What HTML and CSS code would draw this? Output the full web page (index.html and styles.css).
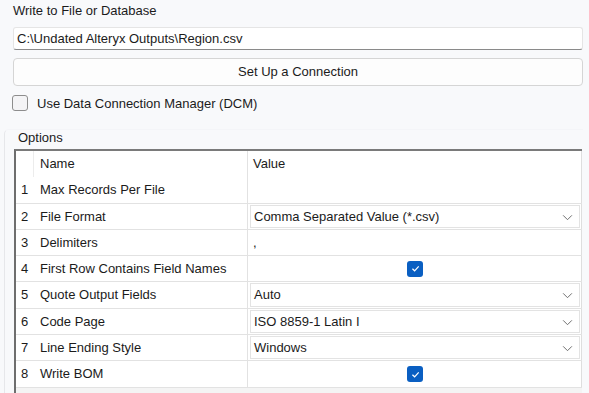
FILE: index.html
```html
<!DOCTYPE html>
<html>
  <head>
    <title>Write to File or Database</title>
    <meta charset="UTF-8" />
    <link rel="stylesheet" href="styles.css">
  </head>

  <body>
    <div class="panel">
      <div class="caption">Write to File or Database</div>
      <div class="path-input">C:\Undated Alteryx Outputs\Region.csv</div>
      <div class="connect-btn">Set Up a Connection</div>
      <label class="dcm">
        <span class="box"></span>
        <span>Use Data Connection Manager (DCM)</span>
      </label>

      <div class="group">
        <div class="group-title">Options</div>
        <div class="grid">
          <div class="row head">
            <div class="num"></div>
            <div class="name">Name</div>
            <div class="value">Value</div>
          </div>
          <div class="row">
            <div class="num">1</div>
            <div class="name">Max Records Per File</div>
            <div class="value"></div>
          </div>
          <div class="row">
            <div class="num">2</div>
            <div class="name">File Format</div>
            <div class="value">
              <div class="combo">Comma Separated Value (*.csv)<svg class="chev" viewBox="0 0 12 8"><path d="M1 1.5 6 6.5 11 1.5" /></svg></div>
            </div>
          </div>
          <div class="row">
            <div class="num">3</div>
            <div class="name">Delimiters</div>
            <div class="value"><span class="plain">,</span></div>
          </div>
          <div class="row">
            <div class="num">4</div>
            <div class="name">First Row Contains Field Names</div>
            <div class="value center"><span class="tick"><svg viewBox="0 0 10 10"><path d="M2.2 5.2 4.2 7.1 7.9 3" /></svg></span></div>
          </div>
          <div class="row">
            <div class="num">5</div>
            <div class="name">Quote Output Fields</div>
            <div class="value">
              <div class="combo">Auto<svg class="chev" viewBox="0 0 12 8"><path d="M1 1.5 6 6.5 11 1.5" /></svg></div>
            </div>
          </div>
          <div class="row">
            <div class="num">6</div>
            <div class="name">Code Page</div>
            <div class="value">
              <div class="combo">ISO 8859-1 Latin I<svg class="chev" viewBox="0 0 12 8"><path d="M1 1.5 6 6.5 11 1.5" /></svg></div>
            </div>
          </div>
          <div class="row">
            <div class="num">7</div>
            <div class="name">Line Ending Style</div>
            <div class="value">
              <div class="combo">Windows<svg class="chev" viewBox="0 0 12 8"><path d="M1 1.5 6 6.5 11 1.5" /></svg></div>
            </div>
          </div>
          <div class="row">
            <div class="num">8</div>
            <div class="name">Write BOM</div>
            <div class="value center"><span class="tick"><svg viewBox="0 0 10 10"><path d="M2.2 5.2 4.2 7.1 7.9 3" /></svg></span></div>
          </div>
        </div>
      </div>
    </div>
  </body>
</html>
```

FILE: styles.css
```css
* {
  box-sizing: border-box;
}

body {
  margin: 0;
  height: 393px;
  overflow: hidden;
  background: #f8f9fb;
  font-family: "Liberation Sans", Arial, sans-serif;
  font-size: 13px;
  color: #1b1b1b;
}

.panel {
  padding: 0 6px 0 13px;
}

.caption {
  height: 20px;
  line-height: 20px;
  padding-top: 1px;
}

.path-input {
  margin-top: 7px;
  height: 23px;
  line-height: 22px;
  padding-left: 3px;
  background: #fff;
  border: 1px solid #e5e5e5;
  border-bottom: 1px solid #8a8a8a;
  border-radius: 3px;
}

.connect-btn {
  margin-top: 8px;
  height: 28px;
  line-height: 26px;
  text-align: center;
  background: #fdfdfd;
  border: 1px solid #d5d5d5;
  border-radius: 4px;
}

.dcm {
  display: flex;
  align-items: center;
  gap: 9px;
  margin: 9px 0 0 -1px;
  height: 16px;
}

.dcm .box {
  width: 16px;
  height: 16px;
  border: 1px solid #8d8d8d;
  border-radius: 3px;
  background: #f4f4f6;
}

/* faint group box edge, only the left side shows */
.group {
  margin: 18px 0 0 -9px;
  padding: 1px 0 0 9px;
  border-left: 1px solid #e6e7ea;
  border-top: 1px solid #f4f5f8;
  border-top-left-radius: 5px;
  height: 270px;
}

.group-title {
  height: 18px;
  line-height: 14px;
  padding-left: 4px;
}

.grid {
  background: #f4f4f4;
  border-top: 2px solid #7a7a7a;
  border-left: 2px solid #6e6e6e;
  width: 568px;
  height: 250px;
}

.row {
  display: flex;
  height: 26.3px;
  background: #fff;
  border-bottom: 1px solid #e2e2e2;
}

.row.head {
  border-bottom: 0;
}

.num {
  width: 18px;
  padding-left: 5px;
  line-height: 26px;
}

.head .num {
  border-right: 1px solid #ececec;
}

.name {
  width: 213px;
  padding-left: 6px;
  line-height: 26px;
}

.value {
  flex: 1;
  border-left: 1px solid #e2e2e2;
  border-right: 1px solid #dedede;
  padding: 1px 1px 1px 2px;
  line-height: 24px;
}

.head .value {
  padding-left: 5px;
}

.value .plain {
  padding-left: 3px;
}

.value.center {
  display: flex;
  align-items: center;
  justify-content: center;
}

.combo {
  position: relative;
  height: 100%;
  background: #fff;
  border: 1px solid #e3e3e3;
  padding-left: 3px;
  line-height: 22px;
}

.chev {
  position: absolute;
  right: 6px;
  top: 8px;
  width: 11px;
  height: 7px;
  fill: none;
  stroke: #6a6a6a;
  stroke-width: 1.1;
}

.tick {
  display: flex;
  align-items: center;
  justify-content: center;
  width: 16px;
  height: 16px;
  border-radius: 3px;
  background: #0a5fc2;
}

.tick svg {
  width: 11px;
  height: 11px;
  fill: none;
  stroke: #fff;
  stroke-width: 1.1;
}
```
